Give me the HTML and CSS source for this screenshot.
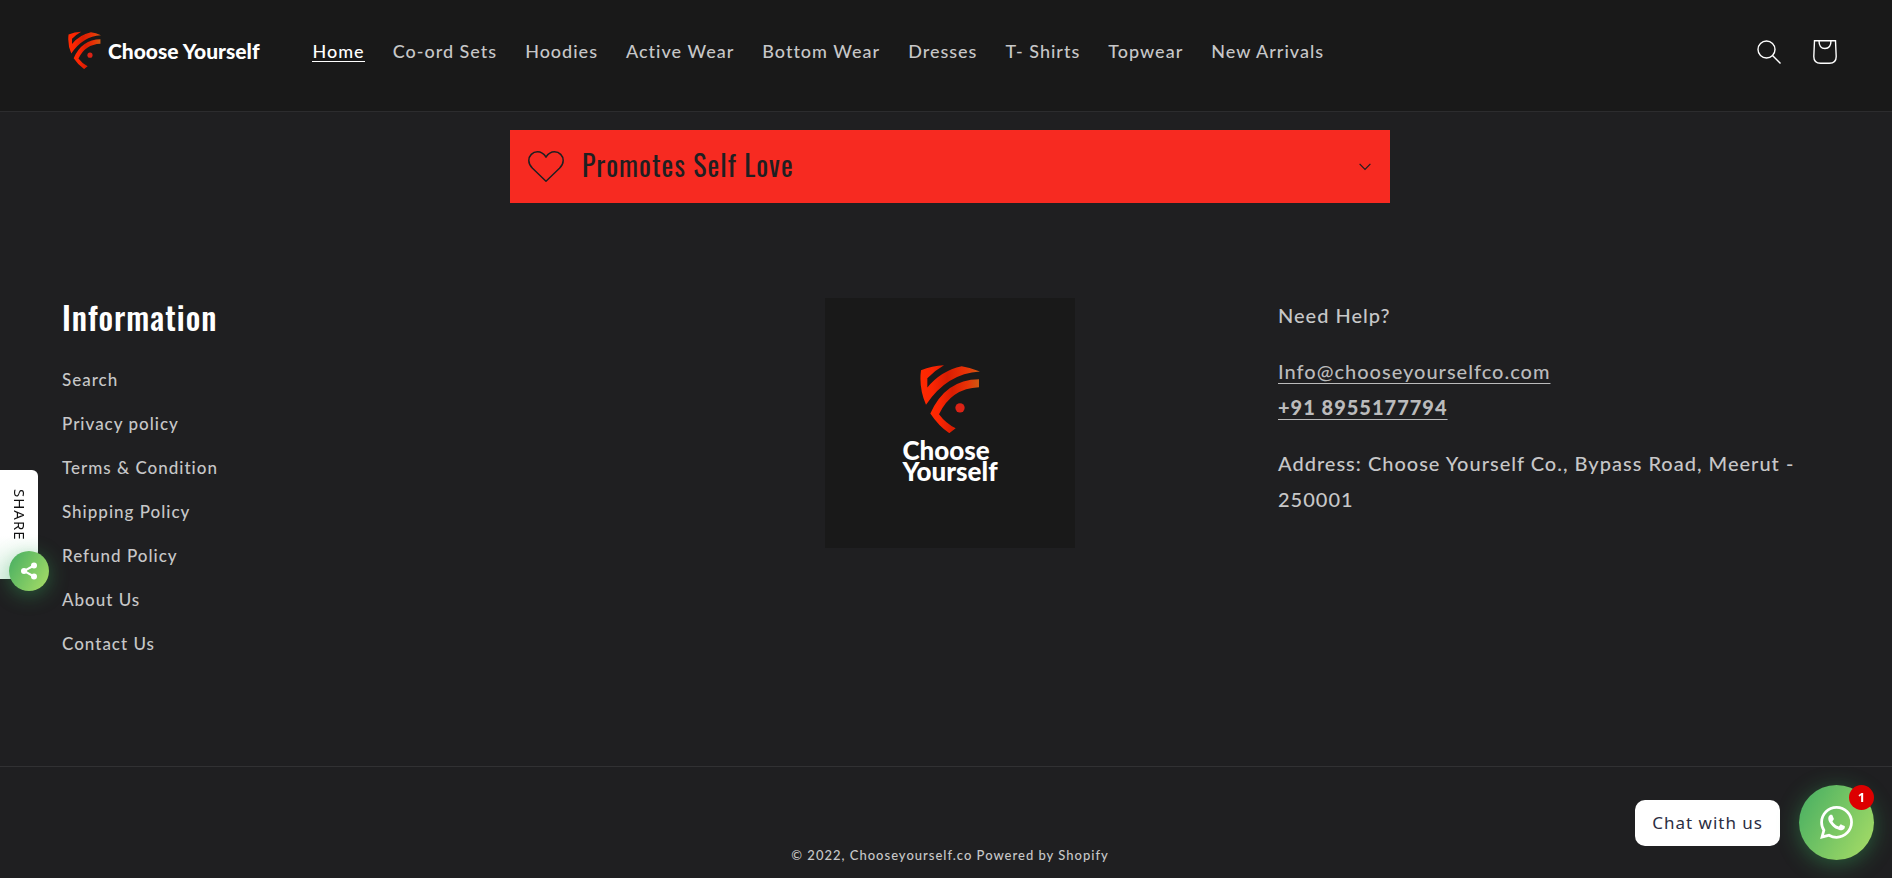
FILE: index.html
```html
<!DOCTYPE html>
<html lang="en">
<head>
<meta charset="utf-8">
<meta name="viewport" content="width=device-width, initial-scale=1">
<title>Choose Yourself</title>
<link rel="stylesheet" href="styles.css">
</head>
<body>
<svg class="defs" width="0" height="0" aria-hidden="true">
  <defs>
    <linearGradient id="flame" x1="0" y1="0" x2="1" y2="0">
      <stop offset="0" stop-color="#ff2a00"/>
      <stop offset=".2" stop-color="#fb2503"/>
      <stop offset=".45" stop-color="#d91d02"/>
      <stop offset=".75" stop-color="#e93206"/>
      <stop offset="1" stop-color="#cf5a12"/>
    </linearGradient>
    <symbol id="shield" viewBox="0 0 180 206">
      <path fill="url(#flame)" d="M3 18Q36 5 72 3Q45 18 22 42V70Q62 20 125 6Q152 10 180 22Q80 28 18 122Q-4 72 3 18Z"/>
      <path fill="url(#flame)" d="M177 45V69Q94 72 57 150Q78 178 107 192L88 207Q56 186 31 148Q76 46 177 45Z"/>
      <circle cx="120" cy="131" r="14" fill="#dc2316"/>
    </symbol>
  </defs>
</svg>

<header class="header">
  <a class="logo" href="#"><svg class="logo-mark" aria-hidden="true"><use href="#shield"/></svg><span>Choose Yourself</span></a>
  <nav class="nav" aria-label="Main">
    <a class="nav-link active" href="#" aria-current="page">Home</a>
    <a class="nav-link" href="#">Co-ord Sets</a>
    <a class="nav-link" href="#">Hoodies</a>
    <a class="nav-link" href="#">Active Wear</a>
    <a class="nav-link" href="#">Bottom Wear</a>
    <a class="nav-link" href="#">Dresses</a>
    <a class="nav-link" href="#">T- Shirts</a>
    <a class="nav-link" href="#">Topwear</a>
    <a class="nav-link" href="#">New Arrivals</a>
  </nav>
  <div class="tools">
    <button class="tool" type="button" aria-label="Search">
      <svg width="24" height="24" viewBox="0 0 24 24" fill="none" stroke="currentColor" stroke-width="1.4"><circle cx="9.5" cy="9.5" r="8.5"/><path d="M15.5 15.5l8 8"/></svg>
    </button>
    <a class="tool" href="#" aria-label="Cart">
      <svg width="24" height="24" viewBox="0 0 24 24" fill="none" stroke="currentColor" stroke-width="1.4"><path d="M1.5.8h21l.7 15.700q0 6.800-6.800 6.800H7.600q-6.800 0-6.800-6.800ZM6 .8q0 7.700 6 7.700T18 .8"/></svg>
    </a>
  </div>
</header>

<main class="main">
  <details class="accordion">
    <summary class="summary">
      <svg width="36" height="31" viewBox="0 0 36 31" fill="none" stroke="currentColor" stroke-width="1.500" aria-hidden="true"><path d="M18 6C15 1.500 12 .8 9.500.8 4.600.8.8 4.800.8 9.500c0 3.300 1.400 5.500 3.700 7.800L18 30.200l13.500-12.900c2.300-2.300 3.700-4.500 3.700-7.800C35.200 4.800 31.400.8 26.500.8 24 .8 21 1.500 18 6Z"/></svg>
      <h2 class="summary-title">Promotes Self Love</h2>
      <svg width="12" height="8" viewBox="0 0 12 8" fill="none" stroke="currentColor" stroke-width="1.200" aria-hidden="true"><path d="M.6.900L6 6.500l5.400-5.600"/></svg>
    </summary>
  </details>
</main>

<footer class="footer">
  <div class="columns">
    <section>
      <h2 class="heading">Information</h2>
      <ul class="links">
        <li><a href="#">Search</a></li>
        <li><a href="#">Privacy policy</a></li>
        <li><a href="#">Terms &amp; Condition</a></li>
        <li><a href="#">Shipping Policy</a></li>
        <li><a href="#">Refund Policy</a></li>
        <li><a href="#">About Us</a></li>
        <li><a href="#">Contact Us</a></li>
      </ul>
    </section>
    <div class="brand">
      <svg class="brand-mark" aria-hidden="true"><use href="#shield"/></svg>
      <p class="brand-name">Choose<br>Yourself</p>
    </div>
    <section class="help">
      <p>Need Help?</p>
      <p><a href="#">Info@chooseyourselfco.com</a><br><a href="#"><strong>+91 8955177794</strong></a></p>
      <p>Address: Choose Yourself Co., Bypass Road, Meerut - 250001</p>
    </section>
  </div>
  <p class="copyright">© 2022, <a href="#">Chooseyourself.co</a> <a href="#">Powered by Shopify</a></p>
</footer>

<div class="share">
  <span class="share-label">SHARE</span>
  <button class="share-button" type="button" aria-label="Share">
    <svg width="18" height="18" viewBox="0 0 18 18" fill="#fff" stroke="#fff"><path fill="none" stroke-width="2" d="M14 3.500L4 9l10 5.500"/><circle cx="4" cy="9" r="3" stroke="none"/><circle cx="14" cy="3.500" r="3" stroke="none"/><circle cx="14" cy="14.500" r="3" stroke="none"/></svg>
  </button>
</div>

<div class="chat">
  <span class="chat-label">Chat with us</span>
  <button class="chat-button" type="button" aria-label="Chat with us on WhatsApp, 1 message">
    <svg width="33" height="33" viewBox="0 0 24 24" fill="#fff"><path d="M17.472 14.382c-.297-.149-1.758-.867-2.030-.967-.273-.099-.471-.148-.670.150-.197.297-.767.966-.940 1.164-.173.199-.347.223-.644.075-.297-.150-1.255-.463-2.390-1.475-.883-.788-1.480-1.761-1.653-2.059-.173-.297-.018-.458.130-.606.134-.133.298-.347.446-.520.149-.174.198-.298.298-.497.099-.198.050-.371-.025-.520-.075-.149-.669-1.612-.916-2.207-.242-.579-.487-.500-.669-.510-.173-.008-.371-.010-.570-.010-.198 0-.520.074-.792.372-.272.297-1.040 1.016-1.040 2.479 0 1.462 1.065 2.875 1.213 3.074.149.198 2.096 3.200 5.077 4.487.709.306 1.262.489 1.694.625.712.227 1.360.195 1.871.118.571-.085 1.758-.719 2.006-1.413.248-.694.248-1.289.173-1.413-.074-.124-.272-.198-.570-.347m-5.421 7.403h-.004a9.870 9.870 0 01-5.031-1.378l-.361-.214-3.741.982.998-3.648-.235-.374a9.860 9.860 0 01-1.510-5.260c.001-5.450 4.436-9.884 9.888-9.884 2.640 0 5.122 1.030 6.988 2.898a9.825 9.825 0 012.893 6.994c-.003 5.450-4.437 9.884-9.885 9.884m8.413-18.297A11.815 11.815 0 0012.050 0C5.495 0 .160 5.335.157 11.892c0 2.096.547 4.142 1.588 5.945L.057 24l6.305-1.654a11.882 11.882 0 005.683 1.448h.005c6.554 0 11.890-5.335 11.893-11.893a11.821 11.821 0 00-3.480-8.413z"/></svg>
    <span class="badge">1</span>
  </button>
</div>
</body>
</html>
```
FILE: styles.css
```css
* { box-sizing: border-box; }

body {
  margin: 0;
  background: #1f1f21;
  color: #c7c7c8;
  font-family: Lato, "Liberation Sans", sans-serif;
  font-size: 17px;
  font-weight: 500;
  letter-spacing: 1px;
}

h2, p, ul { margin: 0; padding: 0; }
a { color: inherit; text-decoration: none; }
button { border: 0; padding: 0; font: inherit; cursor: pointer; }
svg { display: block; flex: none; }
.defs { position: absolute; }

.header {
  display: flex;
  align-items: flex-start;
  padding: 28px 55px 39px 68px;
  background: #191919;
  border-bottom: 1px solid #2c2c2e;
}

.logo {
  display: flex;
  align-items: center;
  gap: 7px;
  height: 44px;
  margin-right: 53px;
  color: #fff;
  font-size: 21px;
  font-weight: 900;
  letter-spacing: 0;
  white-space: nowrap;
}
.logo-mark { width: 33px; height: 38px; }

.nav { display: flex; flex-wrap: wrap; gap: 28px; padding-top: 13px; font-size: 18px; line-height: 20px; }
.nav-link.active { color: #fff; border-bottom: 1px solid #fff; }

.tools { display: flex; gap: 32px; margin-left: auto; padding-top: 12px; }
.tool { background: none; color: #fff; }

.main { padding: 18px 0 0 8px; }
.accordion { max-width: 880px; margin: 0 auto; background: #f72a21; color: #1f1f21; }
.summary { display: flex; align-items: center; gap: 18px; padding: 14px 19px 14px 18px; list-style: none; cursor: pointer; }
.summary-title { flex: 1; padding-bottom: 3px; font: 400 28px/42px Oswald, "Liberation Sans Narrow", "Liberation Sans", sans-serif; letter-spacing: 1px; }

.footer { padding-top: 95px; }
.columns { display: grid; grid-template-columns: repeat(3, 1fr); gap: 48px; padding: 0 54px 100px 62px; }
.heading { color: #fff; font: 500 32px/38px Oswald, "Liberation Sans Narrow", "Liberation Sans", sans-serif; letter-spacing: 1px; }
.links { list-style: none; padding-top: 22px; font-size: 17px; line-height: 44px; }

.brand {
  display: flex;
  flex-direction: column;
  align-items: center;
  justify-self: center;
  align-self: start;
  width: 250px;
  aspect-ratio: 1;
  padding-top: 66px;
  background: #191919;
}
.brand-mark { width: 60px; height: 69px; }
.brand-name { padding-top: 7px; color: #fff; font-size: 26px; font-weight: 900; line-height: 21px; letter-spacing: 0; }

.help { display: flex; flex-direction: column; gap: 20px; margin-top: -1px; font-size: 20px; line-height: 36px; }
.help a { text-decoration: underline; text-decoration-thickness: 1px; text-underline-offset: 4px; color: #bbbbbc; }
.help strong { font-weight: 900; }

.copyright { padding: 79px 0 15px 8px; border-top: 1px solid #313133; font-size: 13px; font-weight: 500; line-height: 18px; text-align: center; }

.share {
  position: fixed;
  left: 0;
  top: 470px;
  width: 38px;
  height: 109px;
  padding: 19px 10px 19px 11px;
  border-radius: 0 6px 28px 0;
  background: linear-gradient(#fff 60%, #e4f4ea);
  color: #111;
  font: 15px/18px "Noto Sans", sans-serif;
  letter-spacing: 1px;
}
.share-label { writing-mode: vertical-rl; }
.share-button {
  position: absolute;
  left: 9px;
  bottom: -12px;
  display: grid;
  place-items: center;
  width: 40px;
  height: 40px;
  border-radius: 50%;
  background: linear-gradient(120deg, #44ad62, #aade66);
  box-shadow: 0 4px 20px rgba(56, 170, 90, .45);
}

.chat { position: fixed; right: 18px; bottom: 18px; display: flex; align-items: center; gap: 19px; }
.chat-label {
  padding: 11px 17px;
  border-radius: 10px;
  background: #fff;
  color: #2b2d42;
  font: 17px/24px "Noto Sans", sans-serif;
  letter-spacing: 1px;
}
.chat-button {
  position: relative;
  display: grid;
  place-items: center;
  width: 75px;
  height: 75px;
  border-radius: 50%;
  background: linear-gradient(120deg, #44ad62, #aade66);
  box-shadow: 0 4px 22px rgba(56, 170, 90, .45);
}
.badge {
  position: absolute;
  top: 0;
  right: 0;
  width: 25px;
  border-radius: 50%;
  background: #dd0000;
  color: #fff;
  font: 700 13px/25px "Noto Sans", sans-serif;
  letter-spacing: 0;
}
```
